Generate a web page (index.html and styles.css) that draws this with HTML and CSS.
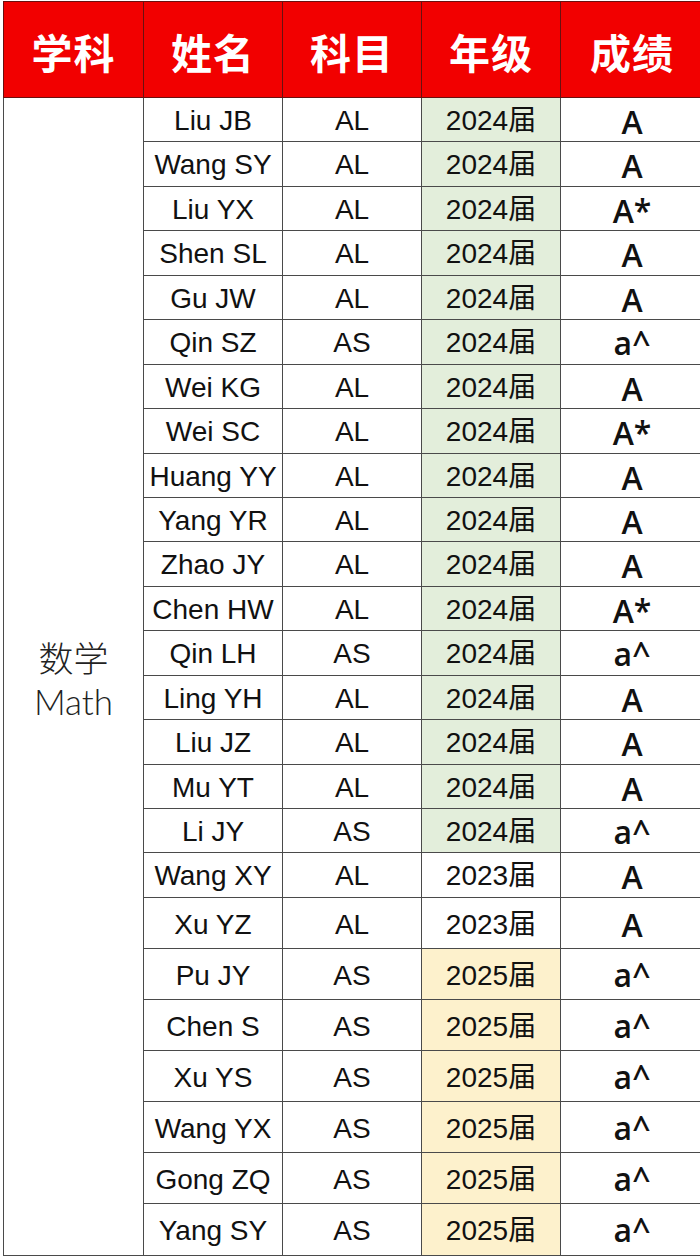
FILE: index.html
```html
<!DOCTYPE html>
<html lang="zh">
<head>
<meta charset="utf-8">
<link rel="stylesheet" href="styles.css">
</head>
<body>
<table class="grades">
<colgroup>
<col class="c1"><col class="c2"><col class="c3"><col class="c4"><col class="c5">
</colgroup>
<thead>
<tr class="head"><th>学科</th><th>姓名</th><th>科目</th><th>年级</th><th>成绩</th></tr>
</thead>
<tbody>
<tr class="r"><td class="subj" rowspan="25"><span class="zh">数学</span><span class="en">Math</span></td><td class="name">Liu JB</td><td class="lvl">AL</td><td class="yr g">2024届</td><td class="gr">A</td></tr>
<tr class="r"><td class="name">Wang SY</td><td class="lvl">AL</td><td class="yr g">2024届</td><td class="gr">A</td></tr>
<tr class="r"><td class="name">Liu YX</td><td class="lvl">AL</td><td class="yr g">2024届</td><td class="gr">A*</td></tr>
<tr class="r"><td class="name">Shen SL</td><td class="lvl">AL</td><td class="yr g">2024届</td><td class="gr">A</td></tr>
<tr class="r"><td class="name">Gu JW</td><td class="lvl">AL</td><td class="yr g">2024届</td><td class="gr">A</td></tr>
<tr class="r"><td class="name">Qin SZ</td><td class="lvl">AS</td><td class="yr g">2024届</td><td class="gr as">a^</td></tr>
<tr class="r"><td class="name">Wei KG</td><td class="lvl">AL</td><td class="yr g">2024届</td><td class="gr">A</td></tr>
<tr class="r"><td class="name">Wei SC</td><td class="lvl">AL</td><td class="yr g">2024届</td><td class="gr">A*</td></tr>
<tr class="r"><td class="name">Huang YY</td><td class="lvl">AL</td><td class="yr g">2024届</td><td class="gr">A</td></tr>
<tr class="r"><td class="name">Yang YR</td><td class="lvl">AL</td><td class="yr g">2024届</td><td class="gr">A</td></tr>
<tr class="r"><td class="name">Zhao JY</td><td class="lvl">AL</td><td class="yr g">2024届</td><td class="gr">A</td></tr>
<tr class="r"><td class="name">Chen HW</td><td class="lvl">AL</td><td class="yr g">2024届</td><td class="gr">A*</td></tr>
<tr class="r"><td class="name">Qin LH</td><td class="lvl">AS</td><td class="yr g">2024届</td><td class="gr as">a^</td></tr>
<tr class="r"><td class="name">Ling YH</td><td class="lvl">AL</td><td class="yr g">2024届</td><td class="gr">A</td></tr>
<tr class="r"><td class="name">Liu JZ</td><td class="lvl">AL</td><td class="yr g">2024届</td><td class="gr">A</td></tr>
<tr class="r"><td class="name">Mu YT</td><td class="lvl">AL</td><td class="yr g">2024届</td><td class="gr">A</td></tr>
<tr class="r"><td class="name">Li JY</td><td class="lvl">AS</td><td class="yr g">2024届</td><td class="gr as">a^</td></tr>
<tr class="r"><td class="name">Wang XY</td><td class="lvl">AL</td><td class="yr">2023届</td><td class="gr">A</td></tr>
<tr class="t"><td class="name">Xu YZ</td><td class="lvl">AL</td><td class="yr">2023届</td><td class="gr">A</td></tr>
<tr class="t"><td class="name">Pu JY</td><td class="lvl">AS</td><td class="yr y">2025届</td><td class="gr as">a^</td></tr>
<tr class="t"><td class="name">Chen S</td><td class="lvl">AS</td><td class="yr y">2025届</td><td class="gr as">a^</td></tr>
<tr class="t"><td class="name">Xu YS</td><td class="lvl">AS</td><td class="yr y">2025届</td><td class="gr as">a^</td></tr>
<tr class="t"><td class="name">Wang YX</td><td class="lvl">AS</td><td class="yr y">2025届</td><td class="gr as">a^</td></tr>
<tr class="t"><td class="name">Gong ZQ</td><td class="lvl">AS</td><td class="yr y">2025届</td><td class="gr as">a^</td></tr>
<tr class="t"><td class="name">Yang SY</td><td class="lvl">AS</td><td class="yr y">2025届</td><td class="gr as">a^</td></tr>
</tbody>
</table>
</body>
</html>
```
FILE: styles.css
```css
html, body {
  margin: 0;
  padding: 0;
  background: #ffffff;
}
body {
  padding: 1px 0 0 3px;
  overflow: hidden;
  font-family: "Liberation Sans", "Noto Sans CJK SC", sans-serif;
  color: #111;
}
.grades {
  border-collapse: collapse;
  table-layout: fixed;
  width: 700px;
}
.c1 { width: 140px; }
.c2 { width: 139px; }
.c3 { width: 139px; }
.c4 { width: 139px; }
.c5 { width: 143px; }
.grades th, .grades td {
  box-sizing: border-box;
  border: 1px solid #4a4a4a;
  text-align: center;
  vertical-align: top;
  padding: 0;
  white-space: nowrap;
  overflow: hidden;
}
.grades .head th {
  height: 96px;
  vertical-align: middle;
  background: #f20000;
  color: #fff;
  font-family: "Noto Sans CJK SC", sans-serif;
  font-weight: 600;
  font-size: 41px;
  letter-spacing: 1px;
  border-color: #6a1010;
  padding-top: 2px;
}
.r td { height: 44.44px; }
.t td { height: 51.1px; }
.name, .lvl, .yr {
  font-size: 28px;
  line-height: 28px;
}
.r .name, .r .lvl, .r .yr { padding-top: 9px; }
.t .name, .t .lvl, .t .yr { padding-top: 13px; }
.yr {
  font-family: "Liberation Sans", "Noto Sans CJK SC", sans-serif;
}
.g { background: #e3eedb; }
.y { background: #fdf1cc; }
.gr {
  font-family: "Open Sans", sans-serif;
  font-weight: 600;
  font-size: 32px;
  line-height: 32px;
}
.r .gr { padding-top: 8px; }
.t .gr { padding-top: 11px; }
.r .gr.as { padding-top: 7px; }
.t .gr.as { padding-top: 10px; }
.grades td.subj {
  vertical-align: middle;
  font-family: "Noto Sans CJK SC", sans-serif;
  font-weight: 300;
  font-size: 35px;
  line-height: 44px;
  color: #222;
  background: #fff;
  padding: 6px 0 0 0;
}
.subj .zh, .subj .en {
  display: block;
}
.subj .en {
  font-family: "Lato", sans-serif;
  font-weight: 300;
  font-size: 35px;
}
```
